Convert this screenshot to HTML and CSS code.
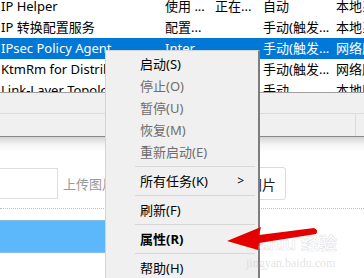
FILE: index.html
```html
<!DOCTYPE html>
<html lang="zh-CN">
<head>
    <meta charset="UTF-8">
    <title>服务</title>
    <link rel="stylesheet" href="styles.css">
</head>
<body>

    <!-- service list -->
    <div class="services">
        <div class="row">
            <span>IP Helper</span><span>使用 ...</span><span>正在...</span><span>自动</span><span>本地系统</span>
        </div>
        <div class="row">
            <span>IP 转换配置服务</span><span>配置...</span><span></span><span>手动(触发...</span><span>本地系统</span>
        </div>
        <div class="row selected">
            <span>IPsec Policy Agent</span><span>Inter...</span><span></span><span>手动(触发...</span><span>网络服务</span>
        </div>
        <div class="row">
            <span>KtmRm for Distributed</span><span>协调...</span><span></span><span>手动(触发...</span><span>网络服务</span>
        </div>
        <div class="row">
            <span>Link-Layer Topology</span><span>创建...</span><span></span><span>手动</span><span>本地服务</span>
        </div>
    </div>
    <div class="strip"></div>
    <div class="strip tabs"><span class="tab"></span></div>

    <!-- page under the window -->
    <div class="page">
        <div class="upload">
            <div class="field"></div>
            <span class="hint">上传图片</span>
            <button class="pick">选择图片</button>
        </div>
        <div class="dots"></div>
        <div class="bar"></div>
    </div>

    <!-- context menu -->
    <ul class="menu">
        <li>启动(S)</li>
        <li class="off">停止(O)</li>
        <li class="off">暂停(U)</li>
        <li class="off">恢复(M)</li>
        <li class="off">重新启动(E)</li>
        <li class="sep"></li>
        <li class="sub">所有任务(K)<span class="more">&gt;</span></li>
        <li class="sep"></li>
        <li>刷新(F)</li>
        <li class="sep"></li>
        <li class="bold">属性(R)</li>
        <li class="sep"></li>
        <li>帮助(H)</li>
    </ul>

    <!-- watermark -->
    <div class="mark">
        <span class="mark-logo">Bai<span class="paw">du</span> 经验</span>
        <span class="mark-url">jingyan.baidu.com</span>
    </div>

    <!-- red arrow -->
    <svg class="arrow" width="364" height="278" viewBox="0 0 364 278">
        <path d="M227 241 L261 227 L259 235 L314 228 Q319 230 316 234 L259 243 L258 250 Z" fill="#e50000"/>
    </svg>

</body>
</html>
```

FILE: styles.css
```css
body {
    margin: 0;
    width: 364px;
    height: 278px;
    overflow: hidden;
    position: relative;
    background: #fff;
    font-family: "Noto Sans", "Noto Sans CJK SC", sans-serif;
    font-size: 13px;
    color: #000;
}

.services {
    height: 92px;
    overflow: hidden;
    border-bottom: 1px solid #a0a0a0;
}

.row {
    display: grid;
    grid-template-columns: 164px 50px 48px 73px 1fr;
    height: 21px;
    line-height: 21px;
    white-space: nowrap;
}

.row:first-child {
    margin-top: -4px;
}

.row span {
    overflow: hidden;
    padding-left: 1px;
}

.selected {
    background: #0078d7;
    color: #fff;
}

.strip {
    height: 20px;
    background: #f0f0f0;
    border-bottom: 1px solid #dcdcdc;
}

.tabs {
    height: 22px;
    border-bottom: 1px solid #888;
    display: flex;
    justify-content: flex-end;
}

.tab {
    width: 8px;
    border-left: 1px solid #dcdcdc;
}

.page {
    background: linear-gradient(#d4d4d4, #f6f6f6 8px, #fff 16px);
    height: 140px;
}

.upload {
    display: flex;
    align-items: center;
    padding-top: 30px;
}

.field {
    width: 57px;
    height: 29px;
    border: 1px solid #dedede;
    border-left: none;
}

.hint {
    margin-left: 5px;
    color: #999;
    font-size: 13px;
}

.pick {
    margin-left: 94px;
    height: 33px;
    padding: 0 9px 0 10px;
    background: #fff;
    border: 1px solid #dcdcdc;
    border-radius: 3px;
    font-family: inherit;
    font-size: 14px;
    color: #222;
}

.dots {
    margin-top: 8px;
    border-top: 1px dotted #c9b9c4;
}

.bar {
    margin-top: 11px;
    width: 140px;
    height: 31px;
    background: #5db7fb;
    border: 1px solid #86bde6;
    border-left: none;
}

.menu {
    position: absolute;
    left: 105px;
    top: 50px;
    width: 152px;
    height: 226px;
    overflow: hidden;
    margin: 0;
    padding: 2px 0 0;
    list-style: none;
    background: #f0f0f0;
    border: 1px solid #d4d4d4;
    border-right: 2px solid #7d7d7d;
}

.menu li {
    height: 22px;
    line-height: 22px;
    padding-left: 34px;
    position: relative;
}

.menu .off {
    color: #6d6d6d;
}

.menu .bold {
    font-weight: bold;
}

.menu .sep {
    height: 7px;
    padding: 0;
    margin-left: 29px;
    margin-right: 3px;
    background: linear-gradient(transparent 3px, #d7d7d7 3px, #d7d7d7 4px, transparent 4px);
}

.more {
    position: absolute;
    right: 14px;
    top: 0;
    font-size: 12px;
}

.mark {
    position: absolute;
    left: 246px;
    top: 229px;
    display: flex;
    flex-direction: column;
    color: rgba(210, 210, 210, 0.75);
    pointer-events: none;
}

.mark-logo {
    font-family: "Liberation Sans", "Noto Sans CJK SC", sans-serif;
    font-size: 18px;
    font-weight: bold;
    -webkit-text-stroke: 0.5px rgba(170, 170, 170, 0.4);
    color: rgba(255, 255, 255, 0.6);
}

.mark-url {
    margin-top: 1px;
    font-family: "Liberation Serif", serif;
    font-size: 12px;
    color: rgba(200, 200, 200, 0.5);
}

.arrow {
    position: absolute;
    left: 0;
    top: 0;
}
```
